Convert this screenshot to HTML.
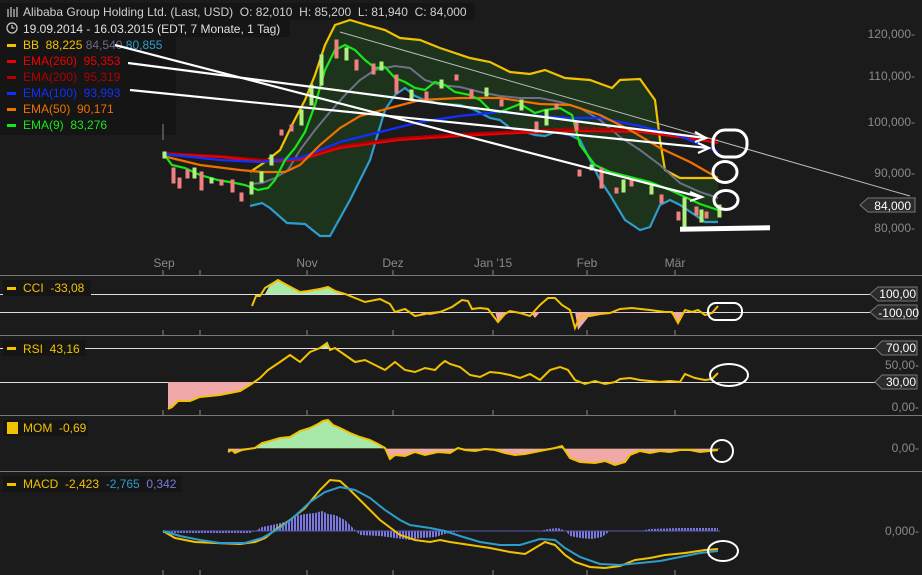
<!DOCTYPE html>
<html><head><meta charset="utf-8"><style>
html,body{margin:0;padding:0;background:#1b1b1b;}
svg{display:block;font-family:"Liberation Sans",sans-serif;}
.ax{fill:#8a8a8a;font-size:12px;}
.lg{font-size:12px;}
</style></head><body>
<svg width="922" height="575" viewBox="0 0 922 575">
<defs>
<pattern id="st" width="3" height="10" patternUnits="userSpaceOnUse"><rect width="2" height="10" fill="#7a78e0"/></pattern>
</defs>
<rect width="922" height="575" fill="#1b1b1b"/>
<!-- legends backgrounds -->
<rect x="0" y="3" width="475" height="17" fill="#151515"/>
<rect x="0" y="20" width="290" height="17" fill="#151515"/>
<rect x="0" y="37" width="176" height="98" fill="#151515"/>
<!-- BB fill -->
<polygon fill="#1d331c" points="250,172 265,162 280,150 292,125 305,100 315,75 325,45 335,25 350,20 370,26 385,30 400,38 420,40 440,48 470,58 490,62 510,72 530,74 545,70 565,78 590,80 612,88 620,80 640,79 655,100 660,140 665,170 680,178 718,178 718,222 705,222 695,215 680,205 670,200 660,205 650,227 640,230 625,220 610,195 600,180 590,160 580,140 570,135 555,132 545,136 535,135 525,132 510,128 500,120 490,118 475,110 460,105 440,104 425,100 415,96 405,88 395,95 385,110 370,160 350,200 330,236 320,236 305,224 287,223 270,208 262,203 250,206"/>
<polyline fill="none" stroke="#f2c200" stroke-width="2.2" points="250,172 265,162 280,150 292,125 305,100 315,75 325,45 335,25 350,20 370,26 385,30 400,38 420,40 440,48 470,58 490,62 510,72 530,74 545,70 565,78 590,80 612,88 620,80 640,79 655,100 660,140 665,170 680,178 718,178"/>
<polyline fill="none" stroke="#2e9ccc" stroke-width="2.2" points="250,206 262,203 270,208 287,223 305,224 320,236 330,236 350,200 370,160 385,110 395,95 405,88 415,96 425,100 440,104 460,105 475,110 490,118 500,120 510,128 525,132 535,135 545,136 555,132 570,135 580,140 590,160 600,180 610,195 625,220 640,230 650,227 660,205 670,200 680,205 695,215 705,222 718,222"/>
<polyline fill="none" stroke="#6f6f8a" stroke-width="2" points="250,184 262,183 275,178 288,170 300,150 315,130 330,112 345,95 360,80 375,70 395,66 410,68 425,80 440,85 460,87 480,92 500,96 520,98 540,98 560,102 580,108 600,120 620,137 640,150 660,165 680,183 700,192 718,198"/>
<polyline fill="none" stroke="#b00000" stroke-width="2" points="163,153 220,156 265,160 300,158 340,146 400,138 460,134 520,131 580,128 640,130 700,137 718,140"/>
<polyline fill="none" stroke="#ee0000" stroke-width="2" points="163,154 220,157 265,162 300,160 340,148 400,140 460,136 520,133 580,131 640,132 700,140 718,143"/>
<polyline fill="none" stroke="#1030ff" stroke-width="2.2" points="163,154 220,160 260,162 300,158 340,142 380,132 420,122 460,116 500,112 540,116 570,118 600,118 640,126 680,136 718,152"/>
<polyline fill="none" stroke="#f07000" stroke-width="2.2" points="163,156 200,165 240,170 262,172 285,172 300,165 320,145 340,128 360,116 390,108 420,100 460,98 500,98 540,104 570,105 600,115 630,130 660,148 690,162 718,178"/>
<polyline fill="none" stroke="#19e619" stroke-width="2.2" points="163,153 172,165 185,168 200,175 218,180 235,183 245,185 258,190 268,188 275,180 285,160 295,148 305,132 315,105 325,70 335,50 345,45 355,50 365,60 375,68 385,67 395,78 405,82 415,88 425,90 435,82 445,85 455,92 470,95 480,100 490,110 500,112 510,108 520,104 535,113 545,110 560,108 572,115 580,145 595,165 610,172 630,177 650,182 670,190 685,197 700,204 718,210"/>
<line x1="340" y1="32" x2="910" y2="196" stroke="#bbbbbb" stroke-width="1"/>
<!-- candles -->
<g stroke-width="1">
<g fill="#f08080" stroke="#f08080">
<rect x="172" y="168" width="3" height="15"/><rect x="178" y="178" width="3" height="10"/><rect x="186" y="170" width="3" height="8"/><rect x="200" y="172" width="3" height="18"/><rect x="220" y="180" width="3" height="5"/><rect x="231" y="180" width="3" height="12"/><rect x="240" y="193" width="3" height="8"/><rect x="280" y="130" width="3" height="5"/><rect x="290" y="125" width="3" height="6"/><rect x="335" y="40" width="3" height="18"/><rect x="355" y="60" width="3" height="10"/><rect x="372" y="64" width="3" height="10"/><rect x="395" y="75" width="3" height="18"/><rect x="425" y="92" width="3" height="10"/><rect x="455" y="75" width="3" height="5"/><rect x="470" y="90" width="3" height="8"/><rect x="500" y="100" width="3" height="6"/><rect x="535" y="122" width="3" height="10"/><rect x="555" y="104" width="3" height="5"/><rect x="575" y="122" width="3" height="8"/><rect x="578" y="170" width="3" height="6"/><rect x="600" y="168" width="3" height="20"/><rect x="615" y="188" width="3" height="5"/><rect x="630" y="180" width="3" height="6"/><rect x="660" y="195" width="3" height="8"/><rect x="677" y="212" width="3" height="8"/><rect x="695" y="207" width="3" height="8"/><rect x="705" y="212" width="3" height="6"/>
</g>
<g fill="#b0f080" stroke="#b0f080">
<rect x="163" y="152" width="3" height="6"/><rect x="193" y="168" width="3" height="10"/><rect x="210" y="178" width="3" height="5"/><rect x="250" y="182" width="3" height="12"/><rect x="260" y="172" width="3" height="10"/><rect x="270" y="155" width="3" height="10"/><rect x="300" y="110" width="3" height="15"/><rect x="310" y="85" width="3" height="20"/><rect x="320" y="55" width="3" height="30"/><rect x="345" y="48" width="3" height="12"/><rect x="380" y="62" width="3" height="8"/><rect x="410" y="90" width="3" height="10"/><rect x="440" y="80" width="3" height="8"/><rect x="485" y="88" width="3" height="8"/><rect x="520" y="100" width="3" height="10"/><rect x="545" y="110" width="3" height="15"/><rect x="590" y="165" width="3" height="5"/><rect x="622" y="180" width="3" height="12"/><rect x="650" y="186" width="3" height="8"/><rect x="683" y="198" width="3" height="32"/><rect x="700" y="210" width="3" height="12"/><rect x="718" y="205" width="3" height="12"/>
</g></g>
<!-- right axis -->
<g class="ax" text-anchor="end">
<text x="915" y="38">120,000-</text><text x="915" y="80">110,000-</text><text x="915" y="126">100,000-</text><text x="915" y="177">90,000-</text><text x="915" y="232">80,000-</text>
</g>
<polygon points="860,205 868,198 915,198 915,212 868,212" fill="#2b2b2b" stroke="#777"/>
<text x="911" y="210" fill="#fff" font-size="12" text-anchor="end">84,000</text>
<g class="ax" text-anchor="middle"><text x="164" y="267">Sep</text><text x="307" y="267">Nov</text><text x="393" y="267">Dez</text><text x="493" y="267">Jan '15</text><text x="587" y="267">Feb</text><text x="675" y="267">Mär</text></g>
<g stroke="#777"><line x1="0" y1="275.5" x2="922" y2="275.5"/><line x1="0" y1="335.5" x2="922" y2="335.5"/><line x1="0" y1="415.5" x2="922" y2="415.5"/><line x1="0" y1="471.5" x2="922" y2="471.5"/></g>
<g stroke="#888"><path d="M163,270v5M200,270v5M307,270v5M393,270v5M493,270v5M587,270v5M675,270v5M163,330v5M200,330v5M307,330v5M393,330v5M493,330v5M587,330v5M675,330v5M163,410v5M200,410v5M307,410v5M393,410v5M493,410v5M587,410v5M675,410v5M163,570v5M200,570v5M307,570v5M393,570v5M493,570v5M587,570v5M675,570v5M163,124v16"/></g>
<!-- CCI -->
<g stroke="#ddd"><line x1="0" y1="294.5" x2="870" y2="294.5"/><line x1="0" y1="312.5" x2="870" y2="312.5"/></g>
<polygon fill="#a8e8a8" points="265,294 270,285 278,280 285,283 300,292 320,288 328,287 345,294"/>
<polygon fill="#f0a8a8" points="415,312 430,315 445,312 495,312 498,322 505,313 530,312 535,318 540,312 575,312 578,330 590,315 600,313 670,312 678,322 683,312"/>
<polyline fill="none" stroke="#f2c200" stroke-width="2" points="252,306 256,296 260,296 265,288 270,285 278,280 285,284 300,292 308,291 320,289 328,287 335,291 345,294 355,298 365,302 380,299 390,304 395,312 405,309 415,316 430,313 440,312 452,307 462,300 468,301 472,309 480,308 488,309 498,322 505,314 510,311 520,313 530,316 540,305 548,298 555,298 562,305 570,310 575,328 580,316 590,316 600,314 610,313 620,309 632,308 650,310 665,312 672,312 678,323 685,310 692,312 698,310 705,315 712,313 718,306"/>
<rect x="708" y="303" width="34" height="17" rx="8" fill="none" stroke="#fff" stroke-width="2"/>
<polygon points="870,294 878,287 917,287 917,301 878,301" fill="#2b2b2b" stroke="#777"/><text x="916" y="298" fill="#fff" font-size="12" text-anchor="end">100,00</text>
<polygon points="870,312 878,305 917,305 917,319 878,319" fill="#2b2b2b" stroke="#777"/><text x="919" y="317" fill="#fff" font-size="12" text-anchor="end">-100,00</text>
<!-- RSI -->
<g stroke="#ddd"><line x1="0" y1="348.5" x2="875" y2="348.5"/><line x1="0" y1="382.5" x2="875" y2="382.5"/></g>
<polygon fill="#f0a8a8" points="168,382 168,409 172,407 178,401 190,401 200,397 220,395 240,391 250,385 255,382"/>
<polygon fill="#a8e8a8" points="320,348 327,343 330,348"/>
<polyline fill="none" stroke="#f2c200" stroke-width="2" points="168,409 172,407 178,401 190,401 200,397 220,395 240,391 250,385 260,378 268,370 280,362 290,355 300,362 310,352 320,348 327,343 330,350 335,348 345,355 355,362 365,360 375,365 385,370 395,362 405,370 415,372 425,368 435,370 440,365 445,361 450,364 460,367 470,375 480,377 490,372 500,373 510,375 520,378 530,374 540,380 550,370 560,367 568,370 575,380 585,384 595,381 605,384 615,382 620,379 630,378 640,380 650,381 660,382 670,381 680,382 685,374 695,378 705,380 712,379 718,373"/>
<ellipse cx="729" cy="375" rx="19" ry="11" fill="none" stroke="#fff" stroke-width="2"/>
<polygon points="875,348 882,341 917,341 917,355 882,355" fill="#2b2b2b" stroke="#777"/><text x="916" y="352" fill="#fff" font-size="12" text-anchor="end">70,00</text>
<polygon points="875,382 882,375 917,375 917,389 882,389" fill="#2b2b2b" stroke="#777"/><text x="916" y="386" fill="#fff" font-size="12" text-anchor="end">30,00</text>
<text x="919" y="369" class="ax" text-anchor="end">50,00-</text><text x="919" y="411" class="ax" text-anchor="end">0,00-</text>
<!-- MOM -->
<polygon fill="#a8e8a8" points="255,448 262,443 270,441 280,438 290,437 300,431 310,428 318,424 323,421 328,420 333,425 340,428 350,433 360,437 370,440 378,444 385,448"/>
<polygon fill="#f0a8a8" points="228,448 228,452 232,450 235,453 242,450 248,449 255,448 385,448 390,459 395,455 405,456 415,452 425,455 438,452 450,453 458,448 465,450 475,451 485,449 495,450 505,453 515,455 525,454 535,452 545,450 555,448 562,446 570,458 580,462 595,463 605,461 615,465 625,462 630,455 640,451 650,453 660,451 670,452 680,450 690,450 700,452 718,450 718,448"/>
<line x1="228" y1="448.5" x2="720" y2="448.5" stroke="#553"/>
<polyline fill="none" stroke="#f2c200" stroke-width="2" points="228,452 232,450 235,453 242,450 248,449 255,448 262,443 270,441 280,438 290,437 300,431 310,428 318,424 323,421 328,420 333,425 340,428 350,433 360,437 370,440 378,444 385,448 390,459 395,455 405,456 415,452 425,455 438,452 450,453 458,448 465,450 475,451 485,449 495,450 505,453 515,455 525,454 535,452 545,450 555,448 562,446 570,458 580,462 595,463 605,461 615,465 625,462 630,455 640,451 650,453 660,451 670,452 680,450 690,450 700,452 718,450"/>
<ellipse cx="722" cy="451" rx="11" ry="11" fill="none" stroke="#fff" stroke-width="2"/>
<text x="919" y="452" class="ax" text-anchor="end">0,00-</text>
<!-- MACD histogram -->
<polygon fill="url(#st)" points="163,531 163,533 250,533 255,531 262,527 272,525 285,522 295,516 305,514 315,513 322,511 328,514 335,515 345,520 352,527 356,531 360,535 380,536 395,538 410,540 420,538 435,537 445,534 455,532 465,531 500,531 540,531 548,529 558,528 566,531 570,536 580,538 592,539 602,537 610,531 640,531 650,529 680,528 700,528 718,528 718,531 163,531"/>
<line x1="163" y1="531" x2="720" y2="531" stroke="#5a58b0"/>
<polyline fill="none" stroke="#f2c200" stroke-width="2" points="163,531 175,538 195,542 215,543 240,544 255,542 265,538 275,530 290,520 305,508 320,490 330,480 340,481 350,490 365,505 380,520 400,535 415,540 430,542 440,540 450,542 470,545 490,548 510,552 525,554 535,548 545,542 555,545 565,555 575,562 590,567 605,568 620,566 635,560 650,558 665,555 685,553 705,550 718,549"/>
<polyline fill="none" stroke="#2e9ccc" stroke-width="2" points="163,531 180,536 200,540 220,543 245,543 262,538 280,528 295,516 310,502 325,492 340,487 355,490 370,498 385,510 400,520 410,525 430,528 445,531 460,536 480,542 500,545 520,545 540,539 555,540 565,548 580,557 600,564 620,565 640,563 660,561 680,557 700,553 718,551"/>
<ellipse cx="723" cy="551" rx="15" ry="10" fill="none" stroke="#fff" stroke-width="2"/>
<text x="919" y="535" class="ax" text-anchor="end">0,000-</text>
<!-- legend text -->
<g stroke="#ccc" stroke-width="1.2" fill="none"><path d="M8,9v8M11,7v10M14,9v8M17,7v10"/><circle cx="12" cy="28" r="5"/><path d="M12,25v3h2.5"/></g>
<text x="23" y="16" fill="#d0d0d0" class="lg">Alibaba Group Holding Ltd. (Last, USD)&#160; O: 82,010&#160; H: 85,200&#160; L: 81,940&#160; C: 84,000</text>
<text x="23" y="33" fill="#e0e0e0" class="lg">19.09.2014 - 16.03.2015 (EDT, 7 Monate, 1 Tag)</text>
<g class="lg">
<rect x="7" y="44" width="9" height="3" fill="#f2c200"/><text x="23" y="49" fill="#f2c200">BB&#160; 88,225 <tspan fill="#6a6a8a">84,540</tspan> <tspan fill="#2e9ccc">80,855</tspan></text>
<rect x="7" y="60" width="9" height="3" fill="#ee0000"/><text x="23" y="65" fill="#ee0000">EMA(260)&#160; 95,353</text>
<rect x="7" y="76" width="9" height="3" fill="#b00000"/><text x="23" y="81" fill="#b00000">EMA(200)&#160; 95,319</text>
<rect x="7" y="92" width="9" height="3" fill="#1030ff"/><text x="23" y="97" fill="#1030ff">EMA(100)&#160; 93,993</text>
<rect x="7" y="108" width="9" height="3" fill="#f07000"/><text x="23" y="113" fill="#f07000">EMA(50)&#160; 90,171</text>
<rect x="7" y="124" width="9" height="3" fill="#19e619"/><text x="23" y="129" fill="#19e619">EMA(9)&#160; 83,276</text>
</g>
<g font-size="12" fill="#f2c200">
<rect x="3" y="280" width="88" height="16" fill="#151515"/><rect x="7" y="287" width="9" height="3"/><text x="23" y="292">CCI&#160; -33,08</text>
<rect x="3" y="340" width="82" height="16" fill="#151515"/><rect x="7" y="347" width="9" height="3"/><text x="23" y="353">RSI&#160; 43,16</text>
<rect x="3" y="420" width="85" height="16" fill="#151515"/><rect x="7" y="422" width="11" height="12"/><text x="23" y="432">MOM&#160; -0,69</text>
<rect x="3" y="476" width="178" height="16" fill="#151515"/><rect x="7" y="483" width="9" height="3"/><text x="23" y="488">MACD&#160; -2,423&#160; <tspan fill="#2e9ccc">-2,765</tspan>&#160; <tspan fill="#7a78e0">0,342</tspan></text>
</g>
<!-- white drawn lines on top -->
<g stroke="#ffffff" stroke-width="2.2" fill="none">
<line x1="115" y1="45" x2="700" y2="197"/>
<line x1="128" y1="63" x2="705" y2="138"/>
<line x1="130" y1="90" x2="708" y2="148"/>
<polyline points="695,132 706,138 695,142"/>
<polyline points="698,143 709,148 698,153"/>
<polyline points="690,192 702,197 690,201"/>
</g>
<rect x="680" y="226" width="90" height="5" fill="#fff" transform="rotate(-1 725 228)"/>
<rect x="713" y="130" width="34" height="27" rx="12" fill="none" stroke="#fff" stroke-width="3"/>
<ellipse cx="725" cy="172" rx="12" ry="10.5" fill="none" stroke="#fff" stroke-width="3"/>
<ellipse cx="726" cy="200" rx="12" ry="9.5" fill="none" stroke="#fff" stroke-width="3"/>
</svg>
</body></html>
